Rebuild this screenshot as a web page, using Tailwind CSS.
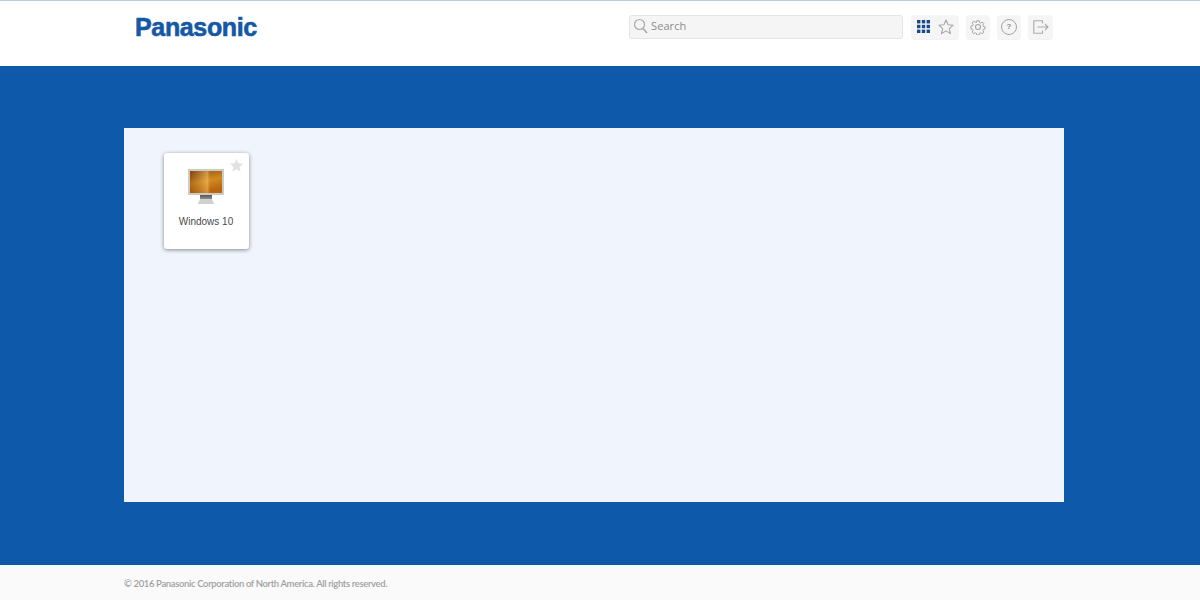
<!DOCTYPE html>
<html lang="en">
<head>
    <meta charset="UTF-8">
    <meta name="viewport" content="width=device-width, initial-scale=1.0">
    <script src="https://cdn.jsdelivr.net/npm/@tailwindcss/browser@4"></script>
    <title>Panasonic</title>
</head>
<body class="h-[600px] w-[1200px] overflow-hidden flex flex-col bg-[#0f59aa] font-['Liberation_Sans',sans-serif]">

    <!-- header -->
    <header class="h-[66px] bg-white border-t border-[#b9c9d8] pl-[135px] pr-[147px] flex items-center justify-between">
        <div class="text-[25px] font-bold leading-none text-[#1458a6] tracking-[-0.35px] mb-[14px] mt-[1px] [-webkit-text-stroke:0.6px_#1458a6]">Panasonic</div>

        <div class="flex items-start h-[25px] mb-[14px] mt-[1px]">
            <!-- search -->
            <div class="w-[274px] h-[24px] mr-[8px] flex items-center gap-[3px] pl-[3px] pb-[1px] bg-[#f5f5f5] border border-[#e4e4e4] rounded-[3px]">
                <svg class="w-[15px] h-[16px]" viewBox="0 0 15 16" fill="none" stroke="#a8a8a8" stroke-width="1.200">
                    <circle cx="6.500" cy="6.500" r="5"/>
                    <path d="M10 10.500l4 4.500" stroke-width="1.600"/>
                </svg>
                <span class="text-[11px] tracking-[0.1px] text-[#8c8c8c] font-['Open_Sans',sans-serif]">Search</span>
            </div>

            <!-- view toggle -->
            <div class="w-[48px] h-[24px] flex items-center bg-[#f5f5f5] rounded-[4px] shadow-[0_1px_1px_rgba(0,0,0,0.06)]">
                <svg class="ml-[6px] w-[13px] h-[13px]" viewBox="0 0 13 13" fill="#1b4a8c">
                    <rect x="0" y="0" width="3.400" height="3.400"/><rect x="4.800" y="0" width="3.400" height="3.400"/><rect x="9.600" y="0" width="3.400" height="3.400"/>
                    <rect x="0" y="4.800" width="3.400" height="3.400"/><rect x="4.800" y="4.800" width="3.400" height="3.400"/><rect x="9.600" y="4.800" width="3.400" height="3.400"/>
                    <rect x="0" y="9.600" width="3.400" height="3.400"/><rect x="4.800" y="9.600" width="3.400" height="3.400"/><rect x="9.600" y="9.600" width="3.400" height="3.400"/>
                </svg>
                <svg class="ml-[8px] w-[16px] h-[16px]" viewBox="0 0 16 16" fill="none" stroke="#a4a4a4" stroke-width="1.100" stroke-linejoin="round">
                    <path d="M8 1l2.100 4.700 5.100.5-3.900 3.400 1.200 5L8 11.900l-4.500 2.700 1.200-5L.8 6.200l5.100-.5z"/>
                </svg>
            </div>

            <!-- settings -->
            <div class="ml-[7px] w-[24px] h-[24px] flex items-center justify-center bg-[#f5f5f5] rounded-[4px] shadow-[0_1px_1px_rgba(0,0,0,0.06)]">
                <svg class="w-[16px] h-[16px]" viewBox="0 0 16 16" fill="none" stroke="#a4a4a4" stroke-width="1.100" stroke-linejoin="round">
                    <circle cx="8" cy="8" r="2.500"/>
                    <path d="M6.700 1h2.600l.4 2 1.300.6 1.800-1.100 1.700 1.900-1.200 1.700.5 1.300 2 .4v2.400l-2 .4-.5 1.300 1.200 1.700-1.700 1.900-1.800-1.100-1.300.6-.4 2H6.700l-.4-2-1.300-.6-1.800 1.100-1.700-1.900 1.200-1.700-.5-1.300-2-.4V6.800l2-.4.5-1.300-1.200-1.700 1.700-1.900L5 2.600 6.300 3z" transform="translate(.8 .8) scale(.9)"/>
                </svg>
            </div>

            <!-- help -->
            <div class="ml-[7px] w-[24px] h-[24px] flex items-center justify-center bg-[#f5f5f5] rounded-[4px] shadow-[0_1px_1px_rgba(0,0,0,0.06)]">
                <div class="w-[16px] h-[16px] rounded-full border border-[#a4a4a4] flex items-center justify-center text-[8px] font-bold leading-none text-[#8e8e8e]">?</div>
            </div>

            <!-- logout -->
            <div class="ml-[7px] w-[25px] h-[24px] flex items-center justify-center bg-[#f5f5f5] rounded-[4px] shadow-[0_1px_1px_rgba(0,0,0,0.06)]">
                <svg class="w-[16px] h-[14px]" viewBox="0 0 16 14" fill="none" stroke="#aaaaaa" stroke-width="1.100">
                    <path d="M9.500 3.500V.8H.8v12.400h8.700v-2.700"/>
                    <path d="M4.500 7h10.500M12 4l3 3-3 3"/>
                </svg>
            </div>
        </div>
    </header>

    <!-- main -->
    <main class="flex-1 pt-[62px] pl-[124px]">
        <div class="w-[940px] h-[374px] bg-[#f0f5fd] pt-[25px] pl-[40px]">
            <div class="relative w-[85px] h-[96px] bg-white rounded-[3px] shadow-[0_1px_4px_rgba(0,0,0,0.45)] flex flex-col items-center pt-[16px]">
                <svg class="absolute top-[6px] right-[6px] w-[13px] h-[13px]" viewBox="0 0 16 16" fill="#e2e2e2">
                    <path d="M8 0l2.400 5.300 5.600.6-4.200 3.800 1.200 5.700L8 12.500l-5 2.900 1.200-5.700L0 5.900l5.600-.6z"/>
                </svg>

                <!-- monitor -->
                <svg class="w-[36px] h-[35px] mr-[1px]" viewBox="0 0 36 35">
                    <defs>
                        <linearGradient id="wall" x1="0" y1="0" x2="0.3" y2="1">
                            <stop offset="0" stop-color="#8a4f18"/>
                            <stop offset="0.55" stop-color="#dc921f"/>
                            <stop offset="1" stop-color="#bd6408"/>
                        </linearGradient>
                        <linearGradient id="shine" x1="0" y1="0" x2="1" y2="0">
                            <stop offset="0" stop-color="#6e3606" stop-opacity="0.4"/>
                            <stop offset="0.55" stop-color="#f6c469" stop-opacity="0.5"/>
                            <stop offset="0.65" stop-color="#a96c25" stop-opacity="0.15"/>
                            <stop offset="1" stop-color="#a96c25" stop-opacity="0.3"/>
                        </linearGradient>
                        <linearGradient id="base" x1="0" y1="0" x2="0" y2="1">
                            <stop offset="0" stop-color="#555"/>
                            <stop offset="1" stop-color="#8f8f8f"/>
                        </linearGradient>
                    </defs>
                    <rect x="0" y="0" width="36" height="26" fill="#cfcac4"/>
                    <rect x="2" y="2" width="32" height="22" fill="url(#wall)"/>
                    <rect x="2" y="2" width="32" height="22" fill="url(#shine)"/>
                    <rect x="12" y="26" width="12" height="4" fill="url(#base)"/>
                    <path d="M10 35l2-5h12l2 5z" fill="#d0d0d0"/>
                </svg>

                <div class="mt-[13px] mr-[1px] text-[10px] leading-none text-[#4a4a4a]">Windows 10</div>
            </div>
        </div>
    </main>

    <!-- footer -->
    <footer class="h-[35px] bg-[#fafafa] pl-[124px] pt-[4px] flex items-center">
        <span class="text-[9.5px] tracking-[-0.36px] font-['Lato',sans-serif] font-semibold text-[#a0a0a0]">© 2016 Panasonic Corporation of North America. All rights reserved.</span>
    </footer>

</body>
</html>
